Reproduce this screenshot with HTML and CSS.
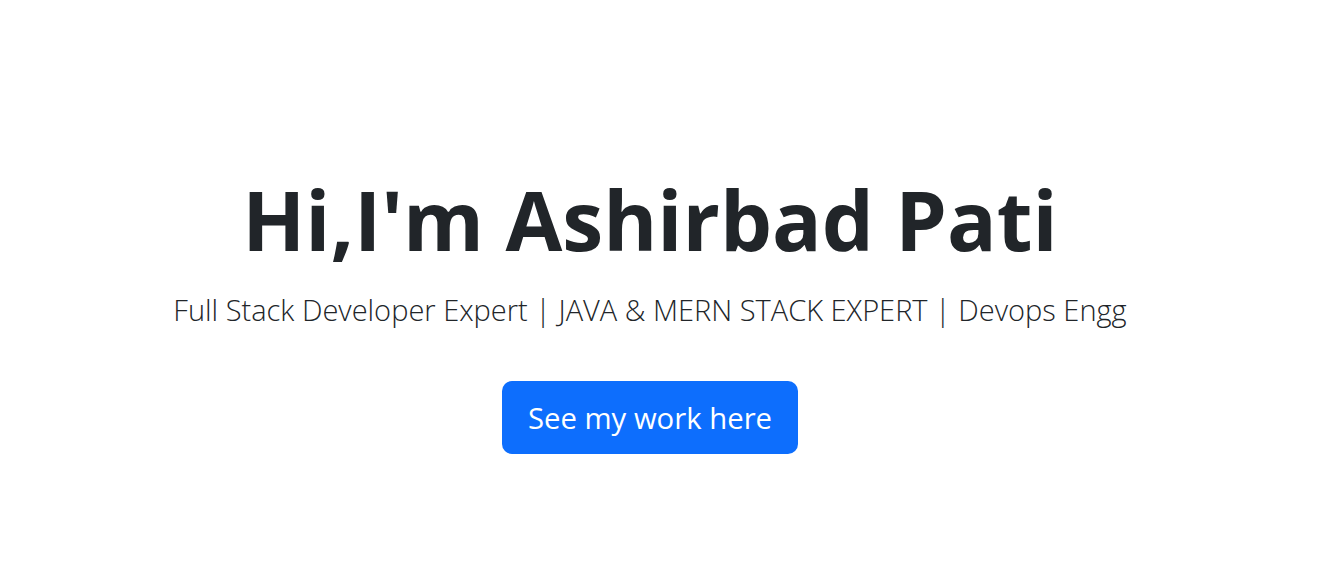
FILE: index.html
```html
<!DOCTYPE html>
<html lang="en">
<head>
<meta charset="utf-8">
<title>Ashirbad Pati</title>
<link rel="stylesheet" href="styles.css">
</head>
<body>
<main class="hero">
  <h1 class="hero-title">Hi,I'm Ashirbad Pati</h1>
  <p class="hero-lead">Full Stack Developer Expert | JAVA &amp; MERN STACK EXPERT | Devops Engg</p>
  <a class="hero-btn" href="#work">See my work here</a>
</main>
</body>
</html>
```

FILE: styles.css
```css
html, body {
  margin: 0;
  padding: 0;
  background: #ffffff;
}
body {
  font-family: "Open Sans", "Noto Sans", "Liberation Sans", sans-serif;
  color: #212529;
}
.hero {
  box-sizing: border-box;
  height: 583px;
  padding: 170px 23px 0 0;
  display: flex;
  flex-direction: column;
  align-items: center;
}
.hero-title {
  margin: 0;
  font-size: 82.4px;
  font-weight: 700;
  line-height: 1.2;
  color: #212529;
}
.hero-lead {
  margin: 19px 0 0;
  font-size: 29px;
  font-weight: 300;
  line-height: 1.5;
  color: #212529;
}
.hero-btn {
  margin-top: 50px;
  display: inline-flex;
  align-items: center;
  justify-content: center;
  width: 296px;
  height: 73px;
  box-sizing: border-box;
  background: #0d6efd;
  color: #ffffff;
  border-radius: 10px;
  font-size: 29.3px;
  text-decoration: none;
}
```
